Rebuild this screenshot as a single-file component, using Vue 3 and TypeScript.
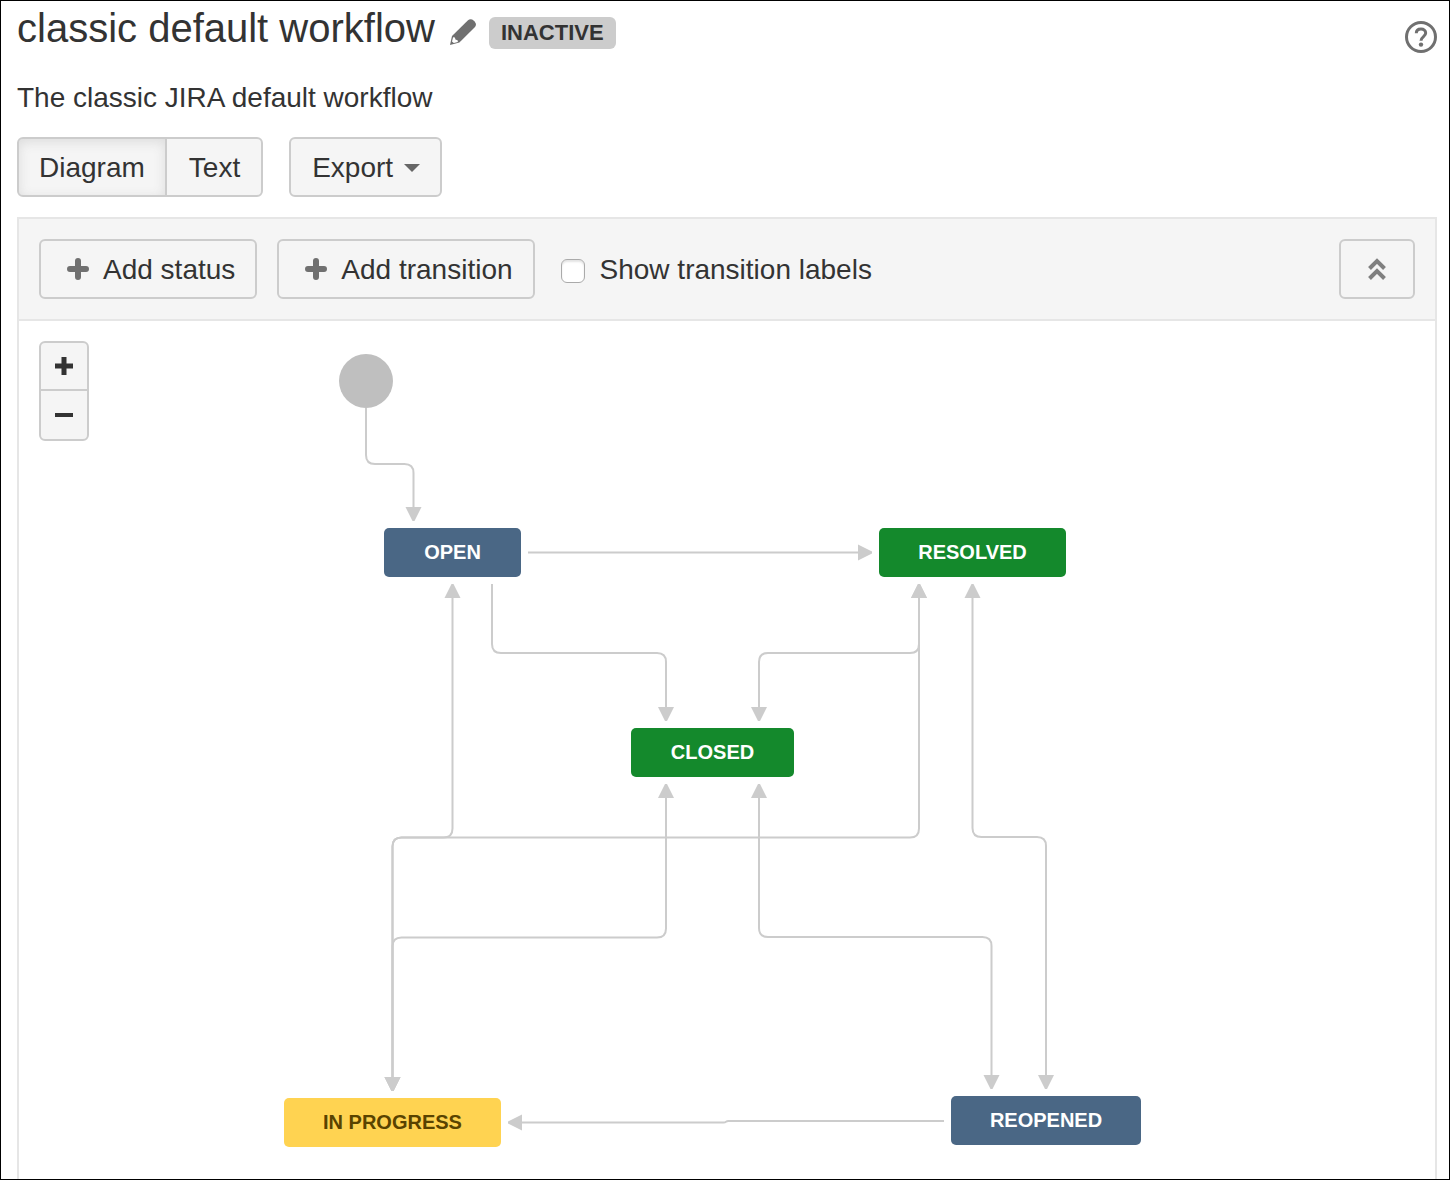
<script setup lang="ts">
import { ref } from 'vue'

type Point = [number, number]

interface StatusNode {
  name: string
  kind: 'new' | 'progress' | 'done'
  x: number
  y: number
  width: number
}

interface Transition {
  id: string
  points: Point[]
  twoWay?: boolean
}

const view = ref<'diagram' | 'text'>('diagram')
const showLabels = ref(false)

const statuses: StatusNode[] = [
  { name: 'OPEN', kind: 'new', x: 365, y: 207, width: 137 },
  { name: 'RESOLVED', kind: 'done', x: 860, y: 207, width: 187 },
  { name: 'CLOSED', kind: 'done', x: 612, y: 407, width: 163 },
  { name: 'IN PROGRESS', kind: 'progress', x: 265, y: 777, width: 217 },
  { name: 'REOPENED', kind: 'new', x: 932, y: 775, width: 190 },
]

const transitions: Transition[] = [
  { id: 'create', points: [[347, 87], [347, 143], [394.5, 143], [394.5, 200]] },
  { id: 'open-resolved', points: [[509, 231.5], [853, 231.5]] },
  { id: 'open-closed', points: [[473, 263], [473, 332], [647, 332], [647, 400]] },
  { id: 'progress-open', twoWay: true, points: [[433.5, 263], [433.5, 516.5], [373.5, 516.5], [373.5, 770]] },
  { id: 'progress-resolved', twoWay: true, points: [[900, 263], [900, 516.5], [373.5, 516.5], [373.5, 770]] },
  { id: 'resolved-closed', twoWay: true, points: [[900, 263], [900, 332], [740, 332], [740, 400]] },
  { id: 'progress-closed', twoWay: true, points: [[647, 463], [647, 616.5], [373.5, 616.5], [373.5, 770]] },
  { id: 'closed-reopened', twoWay: true, points: [[740, 463], [740, 616], [972.5, 616], [972.5, 768]] },
  { id: 'resolved-reopened', twoWay: true, points: [[953.5, 263], [953.5, 516], [1027, 516], [1027, 768]] },
  { id: 'reopened-progress', points: [[925, 800], [708, 800], [706, 801.5], [489, 801.5]] },
]

const CORNER = 9
const HEAD = 12

// Moves from one point towards another by a given distance.
function towards(from: Point, to: Point, distance: number): Point {
  const dx = to[0] - from[0]
  const dy = to[1] - from[1]
  const length = Math.hypot(dx, dy)
  return [from[0] + (dx / length) * distance, from[1] + (dy / length) * distance]
}

function linePath(t: Transition): string {
  const p = t.points.slice()
  const last = p.length - 1
  const start = t.twoWay ? towards(p[0], p[1], HEAD) : p[0]
  const end = towards(p[last], p[last - 1], HEAD)
  let d = `M${start}`
  for (let i = 1; i < last; i++) {
    const before = Math.hypot(p[i][0] - p[i - 1][0], p[i][1] - p[i - 1][1])
    const after = Math.hypot(p[i][0] - p[i + 1][0], p[i][1] - p[i + 1][1])
    const r = Math.min(CORNER, before / 2, after / 2)
    d += `L${towards(p[i], p[i - 1], r)}Q${p[i]} ${towards(p[i], p[i + 1], r)}`
  }
  return `${d}L${end}`
}

function arrowHead(tip: Point, previous: Point): string {
  const angle = (Math.atan2(tip[1] - previous[1], tip[0] - previous[0]) * 180) / Math.PI
  return `translate(${tip}) rotate(${Math.round(angle)})`
}

function heads(t: Transition): string[] {
  const p = t.points
  const list = [arrowHead(p[p.length - 1], p[p.length - 2])]
  if (t.twoWay) list.push(arrowHead(p[0], p[1]))
  return list
}
</script>

<template>
  <main class="page">
    <header class="header">
      <div class="heading">
        <h1>classic default workflow</h1>
        <button class="plain edit" type="button" aria-label="Edit workflow name">
          <svg width="26" height="26" viewBox="0 0 26 26" aria-hidden="true">
            <path d="M2 17 18 1.2Q20 -.4 22.2 .6Q25 2 25.8 4.4Q26.3 6.6 25 8L9.4 23.6 0 26Z" fill="#707070" />
            <path d="M3.1 18.2 4.9 18.4 5.4 20.6 7.6 21.2 7.9 23 3.8 24 2 22.4Z" fill="#fff" />
          </svg>
        </button>
        <span class="badge">INACTIVE</span>
      </div>
      <button class="plain help" type="button" aria-label="Help">
        <svg width="32" height="32" viewBox="0 0 32 32" fill="none" stroke="#707070" aria-hidden="true">
          <circle cx="16" cy="16" r="14.5" stroke-width="3" />
          <path d="M11.3 12.3C11.3 9.4 13.3 8.1 16 8.1S20.7 9.6 20.7 12.1C20.7 15.6 16 15.6 16 19.8" stroke-width="3" />
          <circle cx="16" cy="23.6" r="2.2" fill="#707070" stroke="none" />
        </svg>
      </button>
    </header>

    <p class="description">The classic JIRA default workflow</p>

    <div class="actions">
      <div class="toggle">
        <button class="btn" :class="{ pressed: view === 'diagram' }" type="button" @click="view = 'diagram'">Diagram</button>
        <button class="btn" :class="{ pressed: view === 'text' }" type="button" @click="view = 'text'">Text</button>
      </div>
      <button class="btn export" type="button">
        Export
        <svg width="16" height="8" viewBox="0 0 16 8" aria-hidden="true"><path d="M0 0H16L8 8Z" fill="#666" /></svg>
      </button>
    </div>

    <section class="designer">
      <div class="toolbar">
        <button class="btn" type="button">
          <svg class="add" width="32" height="32" viewBox="0 0 32 32" aria-hidden="true">
            <path d="M17 7V23M9 15H25" stroke="#707070" stroke-width="6" stroke-linecap="round" />
          </svg>
          Add status
        </button>
        <button class="btn" type="button">
          <svg class="add" width="32" height="32" viewBox="0 0 32 32" aria-hidden="true">
            <path d="M17 7V23M9 15H25" stroke="#707070" stroke-width="6" stroke-linecap="round" />
          </svg>
          Add transition
        </button>
        <label class="labels" for="show-labels">
          <input id="show-labels" v-model="showLabels" type="checkbox" />
          Show transition labels
        </label>
        <button class="btn collapse" type="button" aria-label="Collapse">
          <svg width="32" height="32" viewBox="0 0 32 32" fill="none" stroke="#808080" stroke-width="4" aria-hidden="true">
            <path d="M8.5 14.5 16 7 23.5 14.5M8.5 24.5 16 17 23.5 24.5" />
          </svg>
        </button>
      </div>

      <div class="canvas">
        <svg class="edges" width="1200" height="840" viewBox="0 0 1200 840" aria-hidden="true">
          <circle cx="347" cy="60" r="27" fill="#bfbfbf" />
          <g v-for="t in transitions" :key="t.id">
            <path :d="linePath(t)" fill="none" stroke="#ccc" stroke-width="2" />
            <path v-for="head in heads(t)" :key="head" d="M0 -1V1L-14 8V-8Z" :transform="head" fill="#ccc" />
          </g>
        </svg>
        <div
          v-for="s in statuses"
          :key="s.name"
          class="status"
          :class="s.kind"
          :style="{ left: s.x + 'px', top: s.y + 'px', width: s.width + 'px' }"
        >
          {{ s.name }}
        </div>
        <div class="zoom">
          <button class="btn" type="button" aria-label="Zoom in">
            <svg width="20" height="20" viewBox="0 0 20 20" aria-hidden="true"><path d="M10 1V19M1 10H19" stroke="#333" stroke-width="5" /></svg>
          </button>
          <button class="btn" type="button" aria-label="Zoom out">
            <svg width="20" height="20" viewBox="0 0 20 20" aria-hidden="true"><path d="M1 10H19" stroke="#333" stroke-width="4" /></svg>
          </button>
        </div>
      </div>
    </section>
  </main>
</template>

<style>
body {
  margin: 0;
  background: #fff;
}
</style>

<style scoped>
.page {
  box-sizing: border-box;
  display: flex;
  flex-direction: column;
  min-height: 100vh;
  padding: 2px 12px 0 16px;
  border: 1px solid #000;
  color: #333;
  font-family: "Liberation Sans", Arial, sans-serif;
  font-size: 28px;
  line-height: 32px;
}

svg {
  display: block;
  flex: none;
}

.header {
  display: flex;
  align-items: flex-start;
  justify-content: space-between;
}

.heading {
  display: flex;
  align-items: flex-end;
  gap: 8px;
}

h1 {
  margin: 0;
  font-size: 40px;
  font-weight: 400;
  line-height: 50px;
}

.plain {
  padding: 0;
  border: 0;
  background: none;
  cursor: pointer;
}

.edit {
  padding: 6px 5px 8px 7px;
}

.help {
  margin-top: 18px;
}

.badge {
  margin-bottom: 4px;
  padding: 0 12px;
  border-radius: 6px;
  background: #ccc;
  font-size: 22px;
  font-weight: 700;
}

.description {
  margin: 29px 0 23px;
}

.actions {
  display: flex;
  gap: 26px;
  margin-bottom: 20px;
}

.toggle {
  display: flex;
}

.btn {
  box-sizing: border-box;
  display: flex;
  align-items: center;
  justify-content: center;
  height: 60px;
  padding: 2px 20px 0;
  border: 2px solid #ccc;
  border-radius: 6px;
  background: #f5f5f5;
  color: inherit;
  font: inherit;
  white-space: nowrap;
  cursor: pointer;
}

.toggle .btn:first-child {
  border-radius: 6px 0 0 6px;
}

.toggle .btn:last-child {
  margin-left: -2px;
  padding-right: 21px;
  padding-left: 22px;
  border-radius: 0 6px 6px 0;
}

.pressed {
  box-shadow: inset 0 3px 12px #dcdcdc;
}

.export {
  gap: 11px;
  padding-left: 21px;
}

.designer {
  display: flex;
  flex: 1;
  flex-direction: column;
  border: 2px solid #e6e6e6;
  border-bottom: 0;
}

.toolbar {
  display: flex;
  align-items: center;
  gap: 20px;
  padding: 20px;
  border-bottom: 2px solid #e6e6e6;
  background: #f5f5f5;
}

.add {
  margin-right: 10px;
}

.labels {
  display: flex;
  align-items: center;
  gap: 15px;
  margin-left: 6px;
  padding-top: 2px;
}

.labels input {
  appearance: none;
  width: 24px;
  height: 24px;
  margin: 2px 0 0;
  border: 1px solid #aaa;
  border-radius: 6px;
  background: #fff;
  box-shadow: inset 0 2px 2px #e4e4e4;
}

.labels input:checked {
  background: #4a6785;
}

.collapse {
  margin-left: auto;
}

.canvas {
  position: relative;
  flex: 1;
  min-height: 840px;
  overflow: hidden;
}

.edges {
  position: absolute;
  top: 0;
  left: 0;
}

.status {
  position: absolute;
  height: 49px;
  border-radius: 5px;
  color: #fff;
  font-size: 20px;
  font-weight: 700;
  line-height: 48px;
  text-align: center;
  white-space: nowrap;
}

.new {
  background: #4a6785;
}

.done {
  background: #14892c;
}

.progress {
  background: #ffd351;
  color: #594300;
}

.zoom {
  position: absolute;
  top: 20px;
  left: 20px;
}

.zoom .btn {
  width: 50px;
  height: 51px;
  padding: 0;
}

.zoom .btn:first-child {
  height: 50px;
  border-radius: 6px 6px 0 0;
}

.zoom .btn:last-child {
  height: 52px;
  margin-top: -2px;
  border-radius: 0 0 6px 6px;
}
</style>
